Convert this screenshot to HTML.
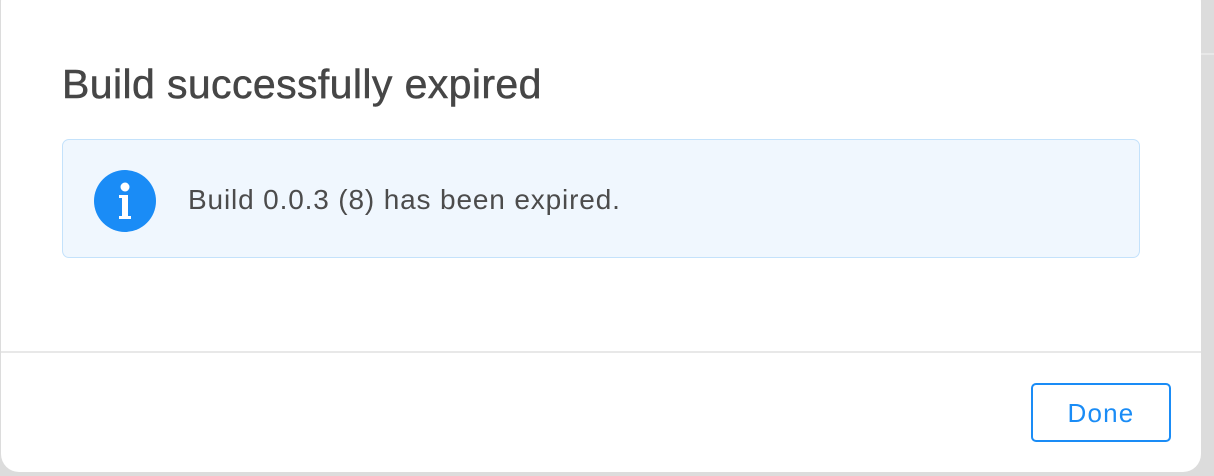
<!DOCTYPE html><html><head><style>
body{margin:0;width:1214px;height:476px;background:#dcdcdc;position:relative;overflow:hidden;font-family:"Liberation Sans",sans-serif}
.rl{position:absolute;left:1201px;right:0;top:53px;height:2px;background:#e8e8e8}
.d{position:absolute;left:1px;top:-16px;width:1200px;height:488px;background:#fff;border-radius:18px}
h1{position:absolute;left:62px;top:64px;margin:0;font-size:41px;line-height:41px;font-weight:normal;color:#464646;letter-spacing:0.4px;white-space:nowrap;-webkit-text-stroke:0.5px #464646}
.box{position:absolute;left:62px;top:139px;width:1076px;height:117px;border:1px solid #c4e2fb;border-radius:7px;background:#f0f7fe}
.ic{position:absolute;left:31px;top:30px;width:62px;height:62px;border-radius:50%;background:#1a8cf6}
.t{position:absolute;left:125px;top:46px;font-size:28px;line-height:28px;color:#4c4c4c;letter-spacing:0.85px;white-space:nowrap}
.sep{position:absolute;left:1px;width:1200px;top:351px;height:2px;background:#e8e8e8}
.btn{position:absolute;left:1031px;top:383px;width:136px;height:55px;border:2px solid #1a8cf6;border-radius:5px;color:#1a8cf6;font-size:26px;text-align:center;line-height:57px;letter-spacing:1.2px}
</style></head><body>
<div class="rl"></div>
<div class="d"></div>
<h1>Build successfully expired</h1>
<div class="box"><div class="ic"><svg width="62" height="62" viewBox="0 0 62 62"><circle cx="31" cy="17" r="4.5" fill="#fff"/><path d="M25 25h9v21h3v3H25v-3h3V28h-3z" fill="#fff"/></svg></div><div class="t">Build 0.0.3 (8) has been expired.</div></div>
<div class="sep"></div>
<div class="btn">Done</div>
</body></html>
